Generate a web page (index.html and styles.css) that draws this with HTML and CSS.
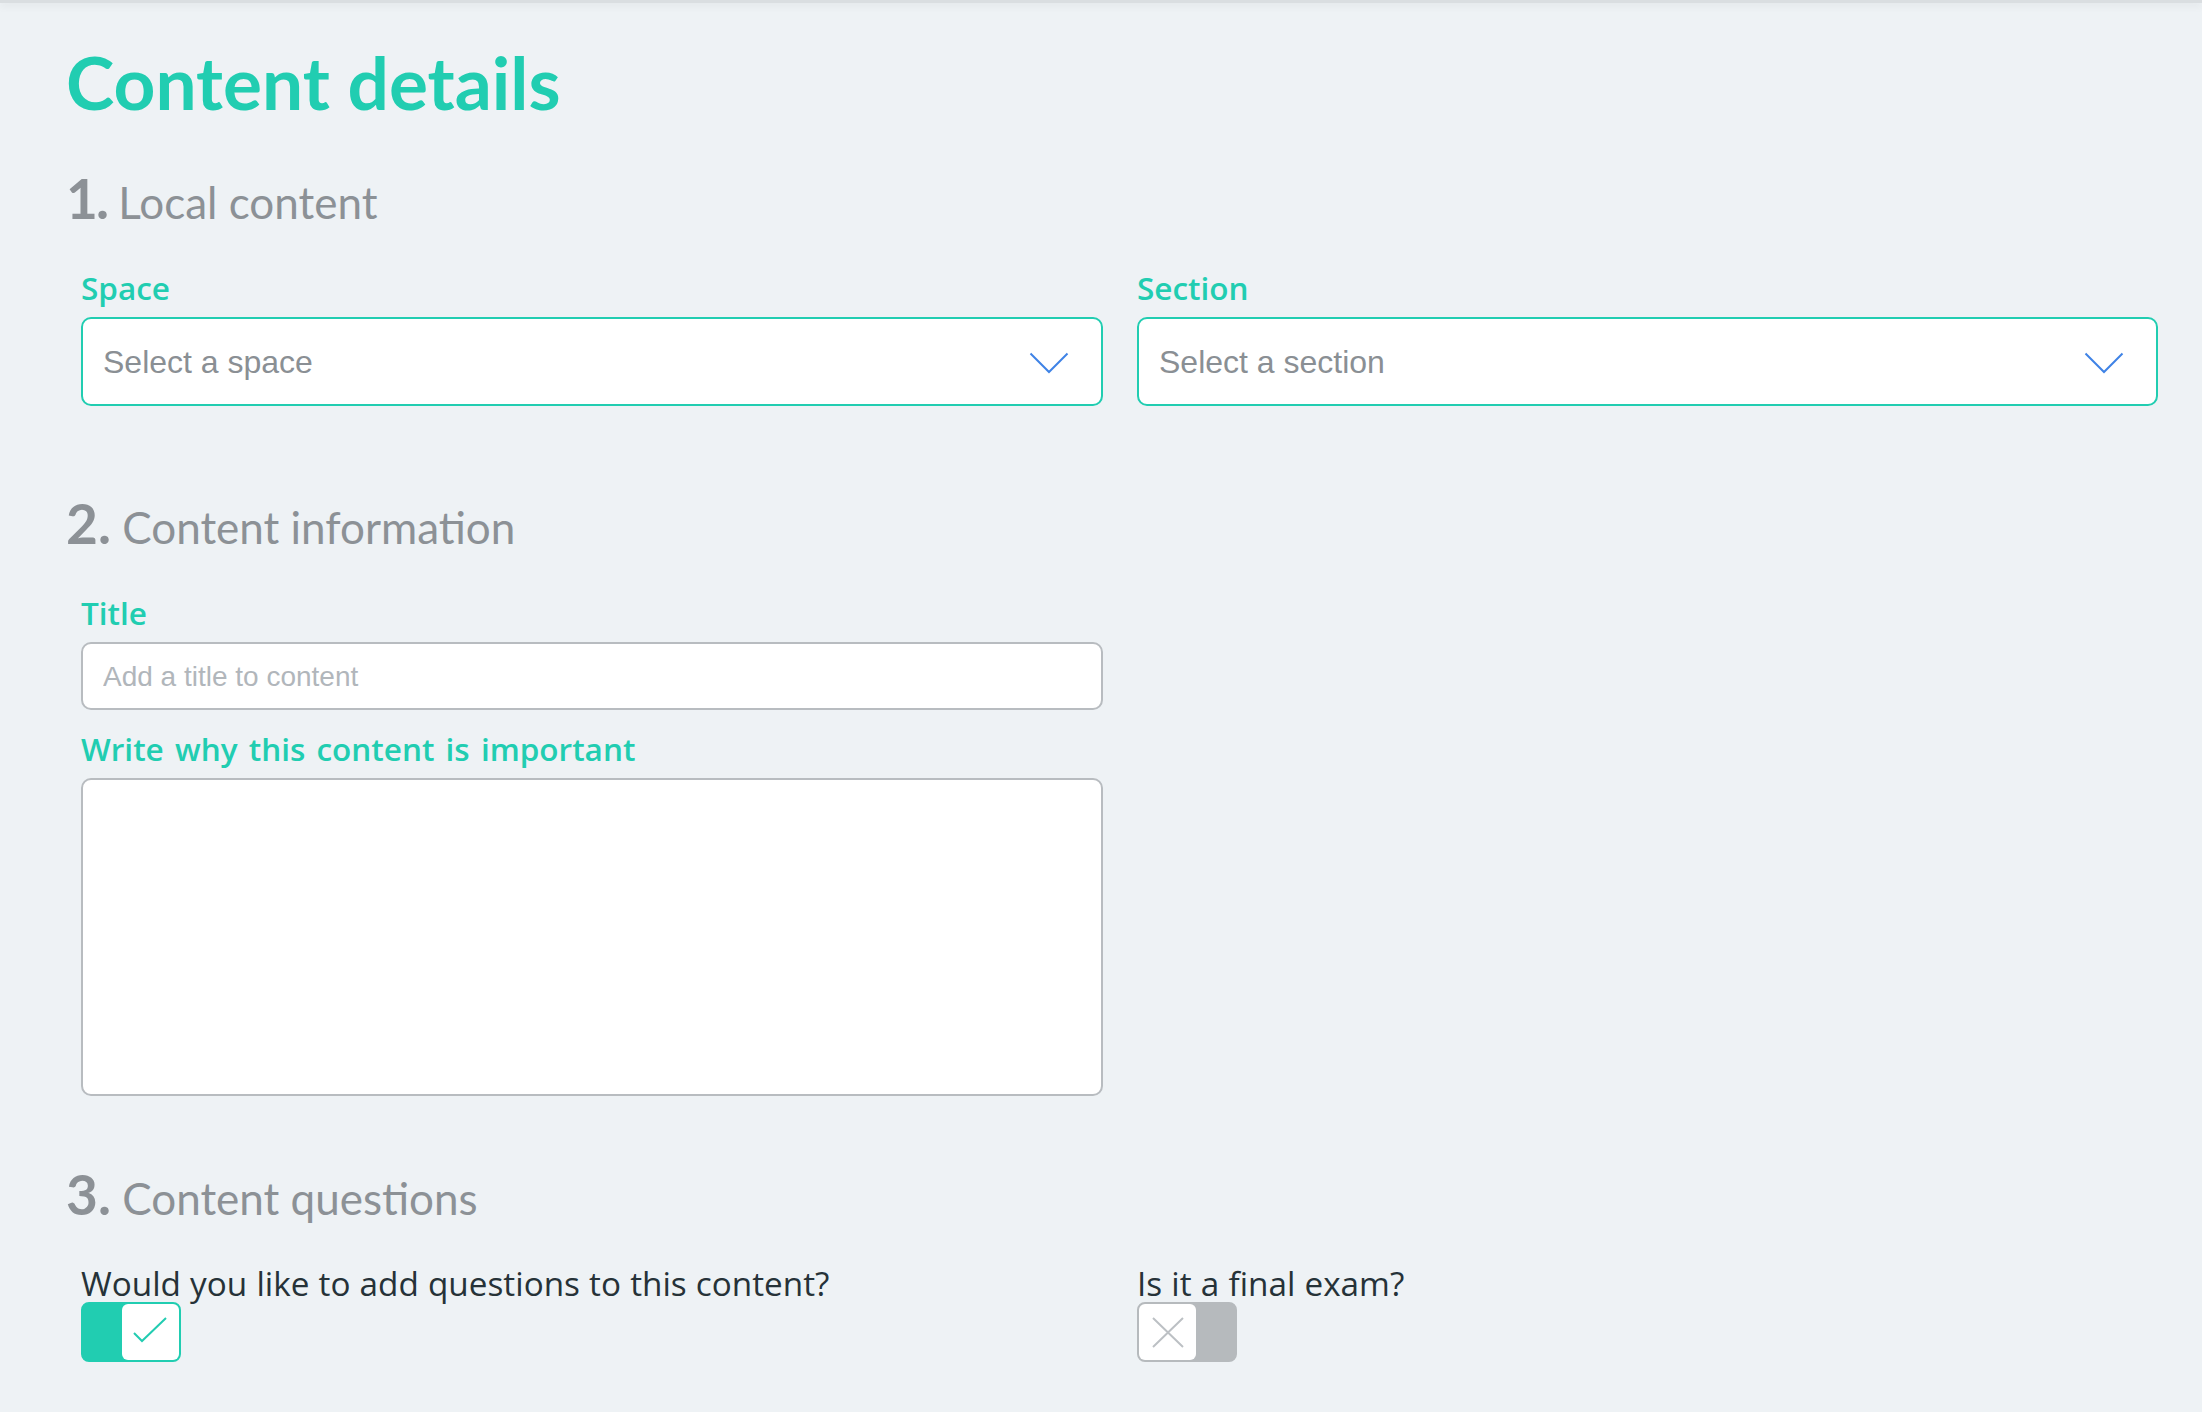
FILE: index.html
```html
<!DOCTYPE html>
<html lang="en">
<head>
<meta charset="utf-8">
<title>Content details</title>
<link rel="stylesheet" href="styles.css">
</head>
<body>
<div class="topbar"></div>
<main class="page">
  <h1 class="page-title">Content details</h1>

  <section class="step step-1">
    <h2 class="step-title"><span class="num">1.</span> Local content</h2>
    <div class="row">
      <div class="field">
        <label class="label">Space</label>
        <div class="select">
          <span class="select-text">Select a space</span>
          <svg class="chevron" width="40" height="22" viewBox="0 0 40 22"><path d="M1.5 1.5 L20 20 L38.5 1.5" fill="none" stroke="#3f83e6" stroke-width="2"/></svg>
        </div>
      </div>
      <div class="field">
        <label class="label">Section</label>
        <div class="select">
          <span class="select-text">Select a section</span>
          <svg class="chevron" width="40" height="22" viewBox="0 0 40 22"><path d="M1.5 1.5 L20 20 L38.5 1.5" fill="none" stroke="#3f83e6" stroke-width="2"/></svg>
        </div>
      </div>
    </div>
  </section>

  <section class="step step-2">
    <h2 class="step-title"><span class="num">2.</span> Content information</h2>
    <div class="row">
      <div class="field">
        <label class="label">Title</label>
        <input class="input" type="text" placeholder="Add a title to content">
        <label class="label label-gap">Write why this content is important</label>
        <textarea class="textarea"></textarea>
      </div>
    </div>
  </section>

  <section class="step step-3">
    <h2 class="step-title"><span class="num">3.</span> Content questions</h2>
    <div class="row">
      <div class="field">
        <p class="question">Would you like to add questions to this content?</p>
        <div class="toggle toggle-on">
          <span class="knob">
            <svg width="57" height="55" viewBox="0 0 57 55"><path d="M12 29 L20 37 L44 14" fill="none" stroke="#22ccb1" stroke-width="2"/></svg>
          </span>
        </div>
      </div>
      <div class="field">
        <p class="question">Is it a final exam?</p>
        <div class="toggle toggle-off">
          <span class="knob">
            <svg width="57" height="55" viewBox="0 0 57 55"><path d="M14 14 L44 43 M44 14 L14 43" fill="none" stroke="#bcc0c4" stroke-width="2"/></svg>
          </span>
        </div>
      </div>
    </div>
  </section>
</main>
</body>
</html>
```

FILE: styles.css
```css
* { box-sizing: border-box; }

html, body {
  margin: 0;
  padding: 0;
  background: #eef2f5;
}

body {
  font-family: Lato, "Open Sans", sans-serif;
  min-height: 1412px;
}

.topbar {
  height: 3px;
  background: #dadee1;
  box-shadow: 0 2px 8px rgba(0, 0, 0, 0.10);
}

.page {
  padding: 0 44px 0 66px;
}

.page-title {
  margin: 37px 0 0;
  font-size: 73px;
  line-height: 84px;
  font-weight: 700;
  color: #21cdb1;
}

.step-title {
  margin: 52px 0 0;
  font-size: 44px;
  line-height: 52px;
  font-weight: 400;
  color: #8c9196;
}

.step-title .num {
  font-size: 55px;
  line-height: 40px;
  font-weight: 700;
}

.step-1 .step-title .num { letter-spacing: -2px; }

.step-2 .step-title { margin-top: 95px; }
.step-3 .step-title { margin-top: 76px; }

.row {
  display: grid;
  grid-template-columns: 1022px 1021px;
  column-gap: 34px;
  margin-top: 41px;
  padding-left: 15px;
}

.field {
  display: flex;
  flex-direction: column;
  align-items: stretch;
}

.label {
  display: block;
  font-family: "Open Sans", Lato, sans-serif;
  font-size: 31.5px;
  line-height: 38px;
  font-weight: 600;
  word-spacing: 3px;
  color: #21cdb1;
  margin-bottom: 10px;
}

.label-gap { margin-top: 20px; }

.select {
  height: 89px;
  border: 2px solid #21cdb1;
  border-radius: 10px;
  background: #fff;
  display: flex;
  align-items: center;
  justify-content: space-between;
  padding: 2px 32px 0 20px;
}

.select-text {
  font-family: "Liberation Sans", Arial, sans-serif;
  font-size: 32px;
  color: #8a8f94;
}

.chevron { display: block; }

.input {
  height: 68px;
  border: 2px solid #b8bcc0;
  border-radius: 10px;
  background: #fff;
  padding: 2px 20px 0;
  font-family: "Liberation Sans", Arial, sans-serif;
  font-size: 28px;
  color: #333;
  outline: none;
}

.input::placeholder { color: #b1b6bb; }

.textarea {
  height: 318px;
  border: 2px solid #b8bcc0;
  border-radius: 10px;
  background: #fff;
  resize: none;
  outline: none;
  font-family: "Liberation Sans", Arial, sans-serif;
  font-size: 28px;
  padding: 16px 20px;
}

.question {
  margin: 0;
  font-family: "Open Sans", Lato, sans-serif;
  font-size: 33.3px;
  line-height: 37px;
  font-weight: 500;
  word-spacing: 0.5px;
  color: #263238;
}

.toggle {
  width: 100px;
  height: 60px;
  border-radius: 8px;
  border: 2px solid;
  display: flex;
}

.toggle-on {
  background: #21cdb1;
  border-color: #21cdb1;
  justify-content: flex-end;
}

.toggle-off {
  background: #b6babd;
  border-color: #b6babd;
  justify-content: flex-start;
}

.knob {
  width: 57px;
  height: 56px;
  background: #fff;
  border-radius: 6px;
  display: block;
}

.knob svg { display: block; }
```
